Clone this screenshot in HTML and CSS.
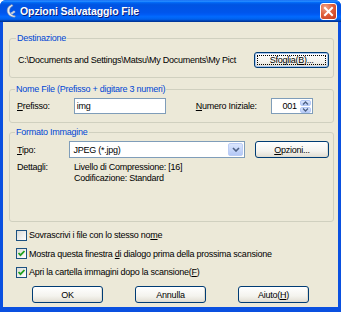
FILE: index.html
```html
<!DOCTYPE html>
<html lang="it">
<head>
<meta charset="utf-8">
<title>Opzioni Salvataggio File</title>
<link rel="stylesheet" href="styles.css">
</head>
<body>
<div class="window">
  <div class="titlebar">
    <svg class="app-icon" width="12" height="14" viewBox="0 0 12 14">
      <path d="M7 0.5 C3 2 1.5 5 2.5 8.5 C3.2 11 6 13 9.5 13.3 L10.5 12 C7.5 11.5 5 9.8 4.6 7.5 C4.2 5 5.5 3 8 1.8 Z" fill="#e8ecf2" stroke="#8a96aa" stroke-width="0.6"/>
      <path d="M5.5 9 L9 6.5 L10.5 8 L7 10.5 Z" fill="#c8ced8"/>
    </svg>
    <span class="title">Opzioni Salvataggio File</span>
    <button class="close" type="button" aria-label="Chiudi">
      <svg width="11" height="11" viewBox="0 0 11 11"><path d="M2 2 L9 9 M9 2 L2 9" stroke="#fff" stroke-width="2" stroke-linecap="square"/></svg>
    </button>
  </div>
  <div class="client">
    <fieldset class="group g-dest">
      <legend>Destinazione</legend>
      <div class="row">
        <span class="path">C:\Documents and Settings\Matsu\My Documents\My Pict</span>
        <button class="btn btn-side focused" type="button">Sfoglia(<u>B</u>)...</button>
      </div>
    </fieldset>

    <fieldset class="group g-name">
      <legend>Nome File (Prefisso + digitare 3 numeri)</legend>
      <div class="row">
        <span class="lbl"><u>P</u>refisso:</span>
        <span class="input prefix">img</span>
        <span class="lbl num-lbl"><u>N</u>umero Iniziale:</span>
        <span class="input spin">
          <span class="spin-val">001</span>
          <span class="spin-btns">
            <span class="spin-b"><svg width="7" height="4" viewBox="0 0 7 4"><path d="M1 3.5 L3.5 1 L6 3.5" fill="none" stroke="#4d6185" stroke-width="1.3"/></svg></span>
            <span class="spin-b"><svg width="7" height="4" viewBox="0 0 7 4"><path d="M1 0.5 L3.5 3 L6 0.5" fill="none" stroke="#4d6185" stroke-width="1.3"/></svg></span>
          </span>
        </span>
      </div>
    </fieldset>

    <fieldset class="group g-fmt">
      <legend>Formato Immagine</legend>
      <div class="row">
        <span class="lbl"><u>T</u>ipo:</span>
        <span class="input select">
          <span class="sel-val">JPEG (*.jpg)</span>
          <span class="sel-btn"><svg width="8" height="5" viewBox="0 0 8 5"><path d="M1 1 L4 4 L7 1" fill="none" stroke="#4d6185" stroke-width="1.6"/></svg></span>
        </span>
        <button class="btn btn-side" type="button"><u>O</u>pzioni...</button>
      </div>
      <div class="details">
        <span class="lbl">Dettagli:</span>
        <span class="det-val">Livello di Compressione: [16]<br>Codificazione: Standard</span>
      </div>
    </fieldset>

    <div class="checks">
      <label class="check"><span class="box"></span><span>Sovrascrivi i file con lo stesso no<u>m</u>e</span></label>
      <label class="check"><span class="box on"><svg width="9" height="9" viewBox="0 0 9 9"><path d="M1.5 4 L3.5 6.2 L7.5 2" fill="none" stroke="#21a121" stroke-width="1.8"/></svg></span><span>Mostra questa finestra <u>d</u>i dialogo prima della prossima scansione</span></label>
      <label class="check"><span class="box on"><svg width="9" height="9" viewBox="0 0 9 9"><path d="M1.5 4 L3.5 6.2 L7.5 2" fill="none" stroke="#21a121" stroke-width="1.8"/></svg></span><span>Apri la cartella immagini dopo la scansione(<u>F</u>)</span></label>
    </div>

    <div class="actions">
      <button class="btn btn-main" type="button">OK</button>
      <button class="btn btn-main" type="button">Annulla</button>
      <button class="btn btn-main" type="button">Aiuto(<u>H</u>)</button>
    </div>
  </div>
</div>
</body>
</html>
```

FILE: styles.css
```css
* { box-sizing: border-box; }
html, body { margin: 0; padding: 0; background: #ffffff; }
body { font-family: "Liberation Sans", Arial, sans-serif; font-size: 9px; letter-spacing: -0.25px; color: #000; }

.window {
  width: 341px;
  height: 312px;
  display: flex;
  flex-direction: column;
  background: #0a50e0;
  border-radius: 6px 6px 0 0;
  overflow: hidden;
}

.titlebar {
  height: 22px;
  flex: none;
  display: flex;
  align-items: center;
  padding: 0 4px 0 5px;
  background: linear-gradient(to bottom, #0058ee 0%, #3593ff 4%, #288eff 6%, #127dff 8%, #036ffc 10%, #0262ee 14%, #0057e5 20%, #0054e3 24%, #0055eb 56%, #005bf5 66%, #026afe 76%, #0062ef 86%, #0052d6 92%, #0040ab 94%, #003092 100%);
}
.app-icon { flex: none; margin-right: 3px; }
.title {
  flex: 1;
  color: #fff;
  font-weight: bold;
  font-size: 10.5px;
  letter-spacing: -0.1px;
  text-shadow: 1px 1px 0 #0a1e7a;
}
.close {
  flex: none;
  width: 17px;
  height: 17px;
  padding: 0;
  border: 1px solid #fff;
  border-radius: 3px;
  display: flex;
  align-items: center;
  justify-content: center;
  background: radial-gradient(circle at 30% 25%, #f0a48a 0%, #e0603c 45%, #c53a1c 100%);
}

.client {
  flex: none;
  height: 285px;
  margin: 0 3px;
  background: #ece9d8;
  display: flex;
  flex-direction: column;
  padding: 11px 4px 4px 6px;
}

.group {
  margin: 0;
  border: 1px solid #d0d0bf;
  border-radius: 3px;
  padding: 0 4px 0 8px;
  min-width: 0;
}
.group legend {
  color: #0046d5;
  padding: 0 1px;
  margin-left: -2px;
  line-height: 10px;
}
.row { display: flex; align-items: center; }

.g-dest { height: 45px; padding-top: 9px; }
.g-name { height: 39px; margin-top: 6px; padding-top: 4px; padding-left: 7px; }
.g-fmt { height: 95px; margin-top: 4px; padding-top: 4px; padding-left: 7px; }

.path {
  width: 230px;
  white-space: nowrap;
  margin-right: 7px;
}

.btn {
  font: inherit;
  letter-spacing: inherit;
  color: #000;
  height: 16px;
  padding: 0;
  border: 1px solid #003c74;
  border-radius: 3px;
  background: linear-gradient(to bottom, #ffffff 0%, #f4f3ee 60%, #e6e3d9 90%, #d6d0c5 100%);
  box-shadow: inset -1px -1px 0 #e0ddd3;
}
.btn-side { width: 75px; margin-left: auto; }
.focused {
  box-shadow: inset 0 0 0 1px #a8c6f0;
  outline: 1px dotted #000;
  outline-offset: -4px;
}

.input {
  height: 16px;
  border: 1px solid #7f9db9;
  background: #fff;
  display: flex;
  align-items: center;
}
.lbl { white-space: nowrap; }
.prefix { width: 92px; margin-left: 24px; padding-left: 2px; }
.num-lbl { margin-left: 30px; }
.spin { width: 42px; margin-left: 14px; justify-content: flex-end; padding: 1px; }
.spin-val { margin-right: 3px; }
.spin-btns { width: 11px; height: 100%; display: flex; flex-direction: column; gap: 1px; }
.spin-b {
  flex: 1;
  display: flex;
  align-items: center;
  justify-content: center;
  border-radius: 2px;
  background: linear-gradient(to bottom, #dbe6fd, #b9cdf7);
  border: 1px solid #b4c8f6;
}

.g-fmt .row { height: 17px; }
.select { width: 176px; height: 17px; margin-left: 34px; padding: 1px; }
.sel-val { flex: 1; padding-left: 2px; }
.sel-btn {
  width: 15px;
  height: 100%;
  display: flex;
  align-items: center;
  justify-content: center;
  border-radius: 2px;
  background: linear-gradient(to bottom, #dbe6fd, #b4c8f6);
  border: 1px solid #bccdf5;
}
.g-fmt .btn-side { width: 74px; margin-left: auto; height: 17px; }

.details { display: flex; margin-top: 4px; line-height: 11px; }
.details .lbl { width: 57px; }

.checks {
  display: flex;
  flex-direction: column;
  margin-top: 4px;
  padding-left: 7px;
}
.check { display: flex; align-items: center; height: 18.5px; }
.box {
  width: 11px;
  height: 11px;
  border: 1px solid #1c5180;
  background: linear-gradient(135deg, #dcdcd7, #ffffff);
  margin-right: 2px;
  display: flex;
  align-items: center;
  justify-content: center;
  flex: none;
}

.actions {
  margin-top: auto;
  display: flex;
  justify-content: center;
  gap: 32px;
  padding-right: 2px;
}
.btn-main { width: 71px; height: 17px; }
```
